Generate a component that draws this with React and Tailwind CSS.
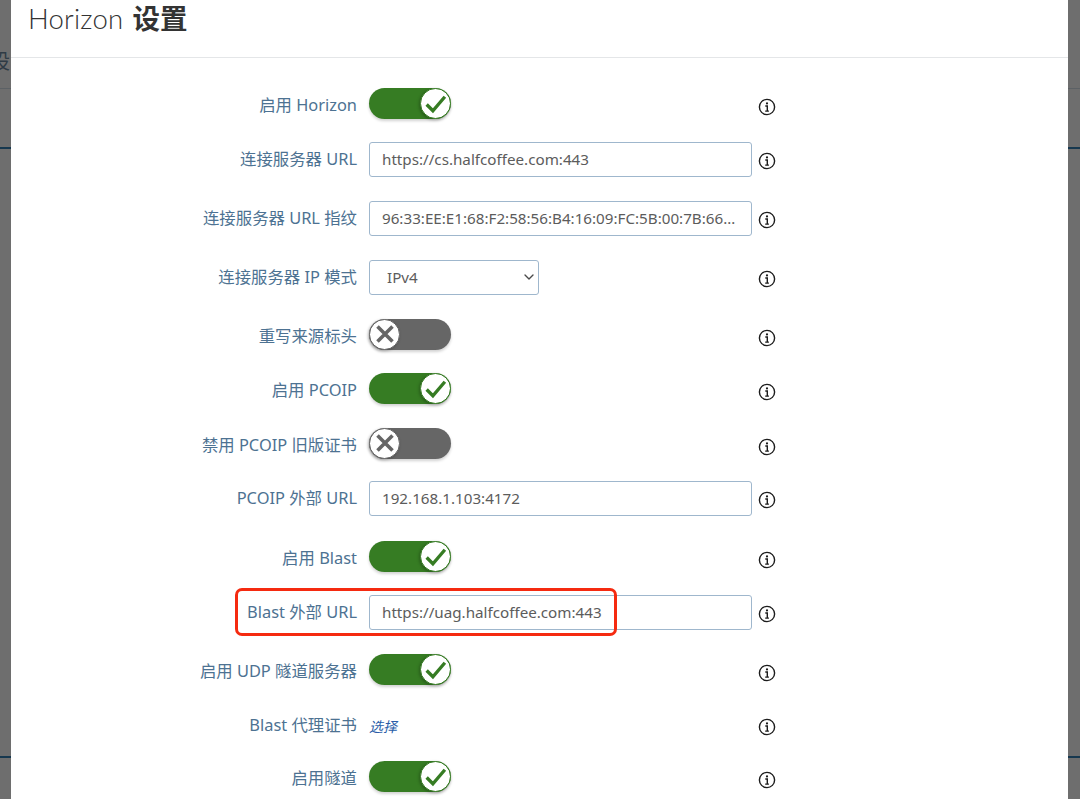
import { ChevronDown } from "lucide-react";

const font = "font-['Noto_Sans','Noto_Sans_CJK_SC',sans-serif]";

const rows = [
  { label: "启用 Horizon", type: "on", h: "h-[54px]" },
  { label: "连接服务器 URL", type: "input", value: "https://cs.halfcoffee.com:443", h: "h-[59px]" },
  { label: "连接服务器 URL 指纹", type: "input", value: "96:33:EE:E1:68:F2:58:56:B4:16:09:FC:5B:00:7B:66:2A:0C:91:D4", h: "h-[59px]" },
  { label: "连接服务器 IP 模式", type: "select", value: "IPv4", h: "h-[59px]" },
  { label: "重写来源标头", type: "off", h: "h-[54px]" },
  { label: "启用 PCOIP", type: "on", h: "h-[55px]" },
  { label: "禁用 PCOIP 旧版证书", type: "off", h: "h-[53px]" },
  { label: "PCOIP 外部 URL", type: "input", value: "192.168.1.103:4172", h: "h-[60px]" },
  { label: "启用 Blast", type: "on", h: "h-[54px]" },
  { label: "Blast 外部 URL", type: "input", value: "https://uag.halfcoffee.com:443", h: "h-[59px]", marked: true },
  { label: "启用 UDP 隧道服务器", type: "on", h: "h-[54px]" },
  { label: "Blast 代理证书", type: "link", h: "h-[53px]" },
  { label: "启用隧道", type: "on", h: "h-[54px]" },
];

const InfoIcon = () => (
  <svg viewBox="0 0 18 18" className="w-[18px] h-[18px] shrink-0 text-[#1c1c1c]" fill="none" stroke="currentColor">
    <circle cx="9" cy="9" r="7.6" strokeWidth="1.4" />
    <circle cx="9" cy="5.4" r="1.1" fill="currentColor" stroke="none" />
    <path d="M7.3 8h2v5M7.2 13.1h3.7" strokeWidth="1.4" />
  </svg>
);

const Toggle = ({ on }) => (
  <div className={`relative w-[82px] h-[31px] rounded-full mb-2 shadow-[0_2px_3px_rgba(0,0,0,0.18)] ${on ? "bg-[#367c23]" : "bg-[#666666]"}`}>
    <div
      className={`absolute top-0 w-[31px] h-[31px] rounded-full bg-white border flex items-center justify-center shadow-[-1px_1px_3px_rgba(0,0,0,0.25)] ${on ? "right-0 border-[#367c23]" : "left-0 border-[#666666]"}`}
    >
      {on ? (
        <svg viewBox="0 0 24 24" className="w-[25px] h-[25px]" fill="none" stroke="#367c23" strokeWidth="3.2">
          <path d="M3.5 13l6 6L21 5.5" />
        </svg>
      ) : (
        <svg viewBox="0 0 24 24" className="w-[24px] h-[24px]" fill="none" stroke="#666666" strokeWidth="3.6">
          <path d="M4.5 4.5l15 15M19.5 4.5l-15 15" />
        </svg>
      )}
    </div>
  </div>
);

const Control = ({ row }) => {
  if (row.type === "on") return <Toggle on />;
  if (row.type === "off") return <Toggle on={false} />;
  if (row.type === "link") return <span className="mb-0.5 text-[14px] italic text-[#2a5da8]">选择</span>;
  if (row.type === "select") {
    return (
      <div className="relative w-[170px] h-[35px] mb-1">
        <select
          defaultValue={row.value}
          className={`${font} appearance-none w-full h-full pl-[17px] rounded-[3px] border border-[#9fb7cd] bg-white text-[15.2px] text-[#5c5c5c] outline-none`}
        >
          <option>IPv4</option>
          <option>IPv6</option>
        </select>
        <ChevronDown className="absolute right-[2px] top-[9px] w-[16px] h-[16px] text-[#4a4a4a] pointer-events-none" strokeWidth={2} />
      </div>
    );
  }
  return (
    <input
      readOnly
      value={row.value}
      className={`${font} shrink-0 w-[383px] h-[35px] mb-1 px-3 rounded-[3px] border border-[#9fb7cd] bg-white text-[15.2px] text-[#5c5c5c] outline-none text-ellipsis`}
    />
  );
};

const Row = ({ row }) => (
  <div className={`relative ${row.h}`}>
    <div className="flex items-center h-11">
      <label className="w-[358px] pr-3 text-right text-[16.4px] leading-5 mb-1 text-[#4d7292] whitespace-nowrap">{row.label}</label>
      <div className="w-[381px] shrink-0 flex items-center h-11">
        <Control row={row} />
      </div>
      <div className="ml-[8px] flex items-center">
        <InfoIcon />
      </div>
    </div>
    {row.marked && (
      <div className="absolute -top-[4px] left-[224px] w-[382px] h-[48px] rounded-[7px] border-[3px] border-[#f52a10] pointer-events-none" />
    )}
  </div>
);

// grey strip of the page behind the dialog
const Backdrop = ({ left }) => (
  <div className={`relative overflow-hidden shrink-0 bg-[#6e6e6e] ${left ? "w-[11px]" : "w-[12px]"}`}>
    {left && <span className="absolute -left-[10px] top-[47px] text-[20px] text-[#2f3b45]">设</span>}
    <div className="absolute top-[88px] inset-x-0 h-px bg-[#5c6165]" />
    <div className="absolute top-[147px] inset-x-0 h-[2px] bg-[#16384f]" />
    <div className="absolute top-[756px] inset-x-0 h-[2px] bg-[#16384f]" />
  </div>
);

export default function App() {
  return (
    <div className={`${font} flex w-[1080px] h-[799px] overflow-hidden bg-white`}>
      <Backdrop left />
      <div className="flex-1 min-w-0 h-[799px] overflow-hidden bg-white">
        <div className="h-[58px] border-b border-[#e4e6e8] pl-[17px]">
          <h1 className="text-[27.5px] leading-[38px] text-[#333333] whitespace-nowrap">
            <span className="font-['Lato',sans-serif] font-light tracking-[0.2px]">Horizon</span>{" "}
            <span className="ml-0.5 font-bold">设置</span>
          </h1>
        </div>
        <div className="pt-[27px]">
          {rows.map((row) => (
            <Row key={row.label} row={row} />
          ))}
        </div>
      </div>
      <Backdrop />
    </div>
  );
}
